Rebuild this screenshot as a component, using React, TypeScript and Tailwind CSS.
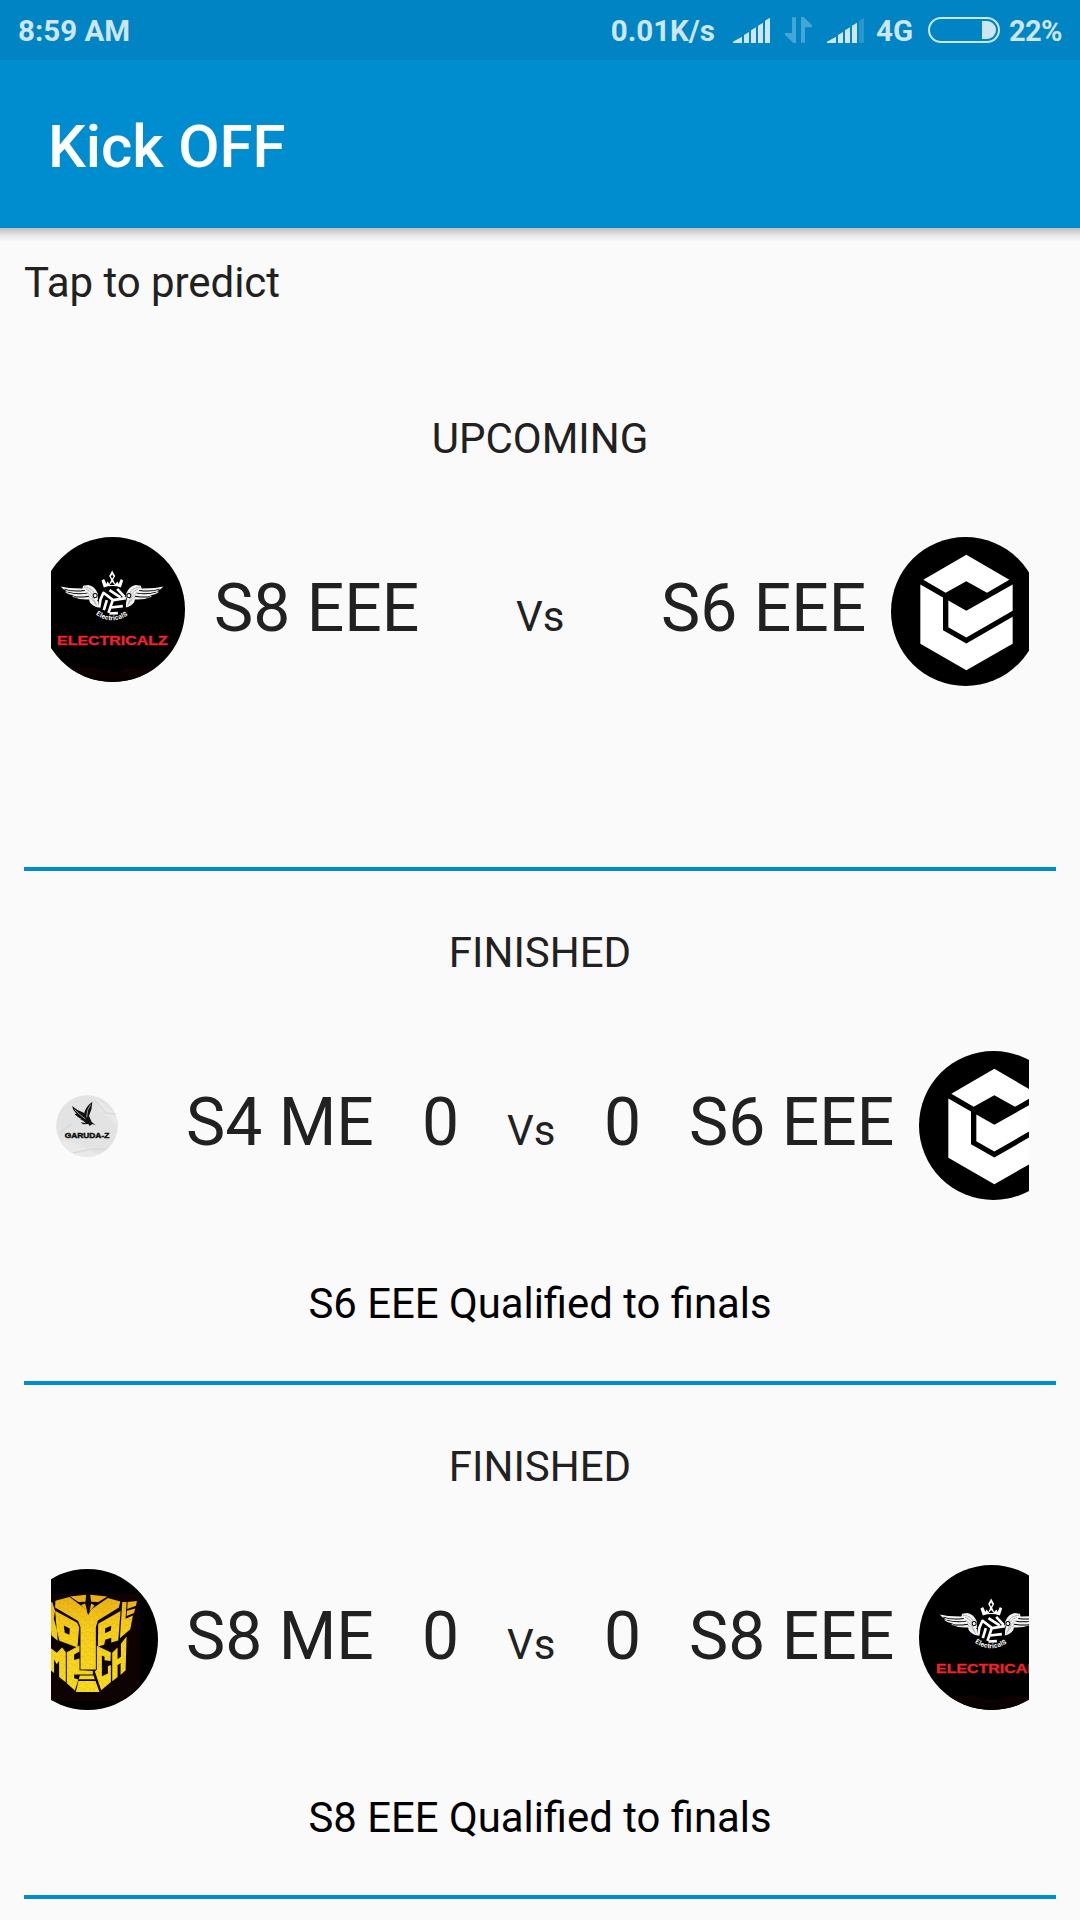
import type { ReactNode } from "react";

function ElectricalzLogo({ className = "" }: { className?: string }) {
  return (
    <svg viewBox="31 51 434 434" className={"h-[145px] w-[145px] shrink-0 " + className}>
      <defs>
        <linearGradient id="ember" x1="0" y1="0" x2="0" y2="1">
          <stop offset="0" stopColor="#120300" />
          <stop offset="1" stopColor="#030000" />
        </linearGradient>
        <clipPath id="disc">
          <circle cx="248" cy="268" r="217" />
        </clipPath>
        <g id="wing">
          <path
            fill="#f2f2f2"
            d="M93 199 L118 204 L158 205 L160 197 L176 195 Q194 198 204 220 L205 262 Q188 258 180 246 L178 238 Q150 240 127 230 L133 227 Q115 224 105 215 L113 214 Q99 208 93 199Z"
          />
          <path
            fill="none"
            stroke="#000"
            strokeWidth="3"
            d="M104 207 Q128 216 165 211 M114 216 Q142 224 172 219 M132 230 Q152 232 178 228"
          />
          <path
            fill="none"
            stroke="#555"
            strokeWidth="2"
            strokeDasharray="3 2"
            d="M162 201 Q186 203 194 220 M170 208 Q190 216 194 236 M172 218 Q188 226 197 249 M178 232 Q190 238 200 256"
          />
          <circle cx="196" cy="226" r="6" fill="#fff" stroke="#000" strokeWidth="3" />
        </g>
        <path id="crestArc" d="M198 283 Q246 317 297 283" />
      </defs>
      <circle cx="248" cy="268" r="217" fill="#000" />
      <path
        clipPath="url(#disc)"
        d="M60 440 L130 444 L190 441 L215 450 L262 455 L285 444 L335 446 L440 436 V485 H60Z"
        fill="url(#ember)"
      />
      <use href="#wing" />
      <use href="#wing" transform="translate(493 0) scale(-1 1)" />
      <path
        fill="#fff"
        d="M247 151 L256 168 L250 179 L256 192 L263 184 L266 192 L273 177 L280 181 L273 202 Q247 194 222 202 L215 181 L223 177 L230 192 L233 184 L239 192 L244 179 L238 168Z"
      />
      <path fill="#000" d="M247 163 L251 169 L247 175 L243 169Z M239 195 L247 186 L255 195Z" />
      <path fill="#000" d="M221 209 L250 203 L273 203 L291 236 L284 270 L250 288 L214 272 L203 240Z" />
      <path
        fill="none"
        stroke="#fff"
        strokeWidth="8"
        strokeLinejoin="round"
        d="M208 262 L212 238 L221 218 L250 240 L288 234 M222 270 L231 240 M236 278 L248 242 M239 210 L272 232 M262 206 L284 230 M243 262 L279 258 M239 280 L264 279"
      />
      <text fill="#fff" fontFamily="Roboto" fontSize="20" fontWeight="700">
        <textPath href="#crestArc" textLength="103">
          ElectricalS
        </textPath>
      </text>
      <text
        x="82"
        y="374"
        fill="#ef2329"
        stroke="#ef2329"
        strokeWidth="1"
        fontFamily="Liberation Sans"
        fontWeight="700"
        fontSize="37"
        textLength="331"
        lengthAdjust="spacingAndGlyphs"
      >
        ELECTRICALZ
      </text>
    </svg>
  );
}

function CubeLogo({ className = "" }: { className?: string }) {
  return (
    <svg viewBox="64 50.5 447 447" className={"h-[149px] w-[149px] shrink-0 " + className}>
      <circle cx="287.5" cy="274" r="223.5" fill="#000" />
      <g fill="#fff">
        <path d="M290 104 L419 179 L352 218 L290 183 L228 218 L161 179Z" />
        <path d="M152 193 L220 232 V330 L290 370 L429 290 V371 L290 450 L152 371Z" />
        <path d="M236 241 L290 272 L429 193 V272 L290 352 L236 321Z" />
      </g>
    </svg>
  );
}

function GarudazLogo({ className = "" }: { className?: string }) {
  return (
    <svg viewBox="50 76 186 186" className={"h-[62px] w-[62px] shrink-0 " + className}>
      <defs>
        <clipPath id="coin">
          <circle cx="143" cy="169" r="92.5" />
        </clipPath>
      </defs>
      <g clipPath="url(#coin)">
        <rect x="50" y="76" width="186" height="186" fill="#e3e3e3" />
        <path d="M160 76 L236 140 V170 L180 120Z M50 205 L120 225 L190 262 H90Z" fill="#e9e9e9" />
        <path
          d="M165 90 L200 130 L236 134 M60 190 L100 160 M100 250 L160 238 L215 240"
          stroke="#dadada"
          strokeWidth="5"
          fill="none"
        />
      </g>
      <path
        d="M159 96 Q159 118 149 139 L157 157 L169 167 L159 163 L151 169 L147 163 L131 164 L124 158 L139 160 Q133 153 121 149 L128 149 Q111 140 105 132 L112 133 Q100 122 98 109 Q114 123 135 130 Q137 113 159 96Z"
        fill="#111"
      />
      <path d="M154 105 Q142 119 142 143 M106 120 Q122 136 138 148" stroke="#ddd" strokeWidth="2" fill="none" />
      <text
        x="76"
        y="206"
        fontFamily="Liberation Sans"
        fontWeight="700"
        fontSize="23"
        stroke="#111"
        strokeWidth="1.5"
        fill="#111"
        textLength="134"
        lengthAdjust="spacingAndGlyphs"
      >
        GARUDA-Z
      </text>
    </svg>
  );
}

function RoyalMechLogo({ className = "" }: { className?: string }) {
  return (
    <svg viewBox="-39 57 422 422" className={"h-[141px] w-[141px] shrink-0 " + className}>
      <defs>
        <linearGradient id="gold" gradientUnits="userSpaceOnUse" x1="0" y1="135" x2="0" y2="425">
          <stop offset="0" stopColor="#eaae16" />
          <stop offset="0.35" stopColor="#f6cf1a" />
          <stop offset="1" stopColor="#f7dc1e" />
        </linearGradient>
        <pattern id="cracks" width="26" height="24" patternUnits="userSpaceOnUse">
          <path
            d="M0 6 L8 10 L14 2 L26 7 M8 10 L11 19 L22 17 L26 7 M11 19 L5 24"
            stroke="#a87508"
            strokeWidth="1"
            fill="none"
            opacity=".45"
          />
        </pattern>
        <g id="mask">
          <path d="M76 152 L118 141 L168 178 L174 195 L183 178 L233 144 L270 154 L266 172 L203 211 L197 231 V358 H151 V231 L144 213 L75 172Z" />
          <path d="M120 139 L168 134 L166 155 L145 156Z M180 134 L231 139 L205 156 L183 155Z M165 160 L171 184 L153 165Z M183 160 L178 184 L193 166Z" />
          <path d="M75 182 L141 218 L147 231 L142 292 L88 272 L80 240Z M101 226 L104 248 L118 254 L119 235Z" fillRule="evenodd" />
          <path d="M204 221 L271 183 L264 271 L243 277 V263 L225 269 L222 284 L203 289Z M225 234 L224 249 L242 241 L243 227Z" fillRule="evenodd" />
          <path d="M276 156 L289 156 L286 206 L308 196 L300 237 L269 264Z M292 156 L320 153 L317 167 L291 177Z M290 182 L315 175 L311 189 L289 198Z" />
          <path d="M45 170 L66 155 L75 182 L71 205 L80 238 L83 272 L64 256 L61 222 L57 245 L45 230Z" />
          <path d="M50 284 L80 308 L96 292 L107 306 V396 L87 380 V332 L80 342 L72 328 V368 L50 350Z" />
          <path d="M110 306 L148 286 V304 L132 313 V329 L148 325 V360 L188 362 V373 H132 V384 L145 388 L134 421 L110 399Z" />
          <path d="M200 287 L242 307 L241 332 L223 330 V320 L215 316 V378 L233 370 V348 L242 344 V395 L213 420 L194 364 L200 358Z" />
          <path d="M246 308 L262 292 V327 L272 320 V281 L289 259 L286 360 L271 374 V338 L262 345 V380 L246 393Z" />
          <path d="M149 376 H190 L194 387 H146Z M145 392 H196 L208 425 H137Z" />
        </g>
        <clipPath id="maskDisc">
          <circle cx="172" cy="268" r="211" />
        </clipPath>
      </defs>
      <g clipPath="url(#maskDisc)">
        <rect x="-39" y="57" width="422" height="422" fill="#000" />
        <rect x="20" y="130" width="310" height="322" fill="#0d0302" />
        <use href="#mask" fill="url(#gold)" />
        <use href="#mask" fill="url(#cracks)" />
      </g>
    </svg>
  );
}

function StatusBar() {
  return (
    <div className="flex h-[60px] items-center bg-[#0084c4] pl-[18px] pr-[18px] text-[29.5px] leading-[30px] font-bold text-[#cce6f3]">
      <span className="mt-[2px]">8:59 AM</span>
      <span className="mt-[2px] ml-auto">0.01K/s</span>
      <svg viewBox="429 51 111 78" className="ml-[18px] h-[26px] w-[37px]" fill="#cce6f3">
        <path d="M429 129 V125 L456 110 V129Z M462 129 V105 L477 96 V129Z M483 129 V91 L498 82 V129Z M504 129 V77 L519 68 V129Z M525 129 V62 L540 53 V129Z" />
      </svg>
      <svg viewBox="585 51 81 78" className="ml-[15px] h-[26px] w-[27px]" fill="#45a5d5">
        <path d="M606 55 Q606 51 612 51 Q618 51 618 55 V129 H610 L585 105 V99 H606Z M633 51 H641 L666 76 V82 H645 V125 Q645 129 639 129 Q633 129 633 125Z" />
      </svg>
      <svg viewBox="711 51 111 78" className="ml-[15px] h-[26px] w-[37px]" fill="#cce6f3">
        <path d="M711 129 V125 L738 110 V129Z M744 129 V105 L759 96 V129Z M765 129 V91 L780 82 V129Z M786 129 V77 L801 68 V129Z" />
        <path fill="#2997cf" d="M807 129 V62 L822 53 V129Z" />
      </svg>
      <span className="mt-[2px] ml-[12px]">4G</span>
      <div className="ml-[15px] flex h-[26px] w-[72px] justify-end rounded-full border-2 border-[#cce6f3] p-[2px]">
        <div className="h-[18px] w-[14px] rounded-r-full bg-[#cce6f3]" />
      </div>
      <span className="mt-[2px] ml-[9px] w-[53px] text-[29px] tracking-[-0.6px]">22%</span>
    </div>
  );
}

type MatchProps = {
  status: string;
  left: ReactNode;
  right: ReactNode;
  result?: string;
  children: ReactNode;
};

function Match({ status, left, right, result, children }: MatchProps) {
  return (
    <section className="flex h-[514px] flex-col border-b-4 border-[#008dcf] px-[27px] pt-[58px]">
      <h2 className="text-center text-[42px] leading-[48px]">{status}</h2>
      <div className="mt-[73px] flex h-[150px] items-center justify-between">
        {left}
        <div className="mt-[4px] flex flex-1 items-baseline text-[66px] leading-[80px] whitespace-nowrap">{children}</div>
        {right}
      </div>
      <p className="mt-[80px] text-center text-[41.85px] leading-[48px] text-black">{result}</p>
    </section>
  );
}

function Logo({ side, wide, children }: { side: "left" | "right"; wide?: boolean; children: ReactNode }) {
  const width = side === "left" ? (wide ? "w-[134px]" : "w-[107px]") : wide ? "w-[138px]" : "w-[110px]";
  const align = side === "left" ? "justify-end" : "justify-start";
  return <div className={"flex h-[150px] shrink-0 items-center overflow-hidden " + width + " " + align}>{children}</div>;
}

function Scored({ home, away }: { home: string; away: string }) {
  return (
    <>
      <span className="ml-[28px] w-[190px]">{home}</span>
      <span className="ml-[46px] w-[37px]">0</span>
      <span className="ml-[48px] w-[48px] text-[42px]">Vs</span>
      <span className="ml-[49px] w-[37px]">0</span>
      <span className="ml-[48px]">{away}</span>
    </>
  );
}

export default function App() {
  return (
    <div className="flex h-[1920px] w-[1080px] flex-col overflow-hidden bg-[#fafafa] font-['Roboto',sans-serif] text-[#212121]">
      <StatusBar />
      <header className="flex h-[168px] shrink-0 items-center bg-[#008dcf] pt-[6px] pl-[48px] text-[60px] leading-[70px] font-medium tracking-[-0.1px] text-white">
        <h1>Kick OFF</h1>
      </header>
      <div className="h-[14px] shrink-0 bg-linear-to-b from-[#bdbdbd] via-[#e6e6e6] to-[#fafafa]" />
      <main className="px-6">
        <p className="mt-[17px] h-[98px] text-[42px] leading-[48px] tracking-[-0.05px]">Tap to predict</p>
        <Match
          status="UPCOMING"
          left={
            <Logo side="left" wide>
              <ElectricalzLogo className="-mt-[3px]" />
            </Logo>
          }
          right={
            <Logo side="right" wide>
              <CubeLogo />
            </Logo>
          }
        >
          <span className="ml-[29px] w-[206px]">S8 EEE</span>
          <span className="ml-[96px] w-[48px] text-[42px]">Vs</span>
          <span className="ml-[97px]">S6 EEE</span>
        </Match>
        <Match
          status="FINISHED"
          result="S6 EEE Qualified to finals"
          left={
            <Logo side="left">
              <GarudazLogo className="mt-[2px] mr-[40px]" />
            </Logo>
          }
          right={
            <Logo side="right">
              <CubeLogo />
            </Logo>
          }
        >
          <Scored home="S4 ME" away="S6 EEE" />
        </Match>
        <Match
          status="FINISHED"
          result="S8 EEE Qualified to finals"
          left={
            <Logo side="left">
              <RoyalMechLogo />
            </Logo>
          }
          right={
            <Logo side="right">
              <ElectricalzLogo className="-mt-[3px]" />
            </Logo>
          }
        >
          <Scored home="S8 ME" away="S8 EEE" />
        </Match>
      </main>
    </div>
  );
}
